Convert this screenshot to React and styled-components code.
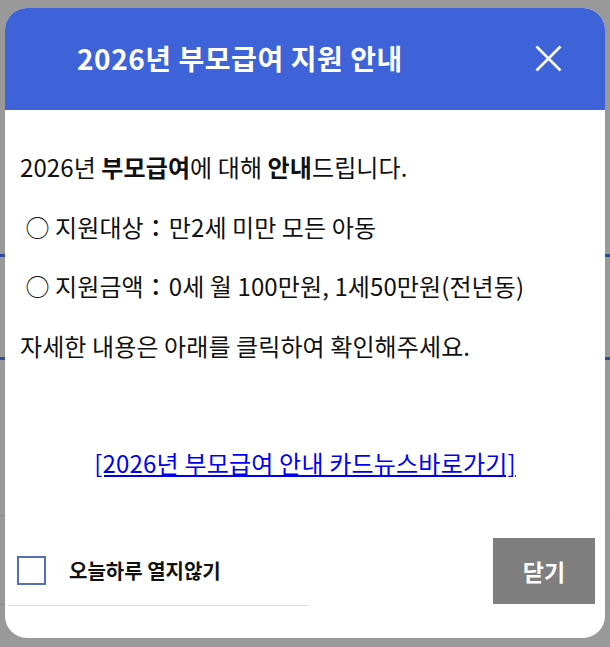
import React from 'react'
import styled, { createGlobalStyle } from 'styled-components'

const GlobalStyle = createGlobalStyle`
  html, body {
    margin: 0;
    padding: 0;
  }
  body {
    background-color: #999999;
    background-image:
      linear-gradient(to bottom, transparent 254px, #2e4a9c 254px, #2e4a9c 257px, transparent 257px),
      linear-gradient(to bottom, transparent 357px, #2e4a9c 357px, #2e4a9c 360px, transparent 360px),
      linear-gradient(to bottom, transparent 515px, #8e8e8e 515px, #8e8e8e 516px, transparent 516px),
      linear-gradient(to bottom, transparent 604px, #8e8e8e 604px, #8e8e8e 605px, transparent 605px);
    background-repeat: no-repeat;
    font-family: "Noto Sans CJK KR", "Noto Sans", sans-serif;
  }
`

const Overlay = styled.div`
  width: 610px;
  height: 647px;
  padding: 8px 5px 9px;
  box-sizing: border-box;
`

const Modal = styled.div`
  width: 600px;
  height: 630px;
  background: #fff;
  border-radius: 22px;
  overflow: hidden;
  display: flex;
  flex-direction: column;
`

const Header = styled.div`
  height: 102px;
  flex-shrink: 0;
  background: #3e62d8;
  display: flex;
  align-items: center;
  justify-content: space-between;
  padding: 0 43px 2px 72px;
  box-sizing: border-box;
`

const Title = styled.h1`
  margin: 0;
  color: #fff;
  font-size: 28px;
  font-weight: 700;
  letter-spacing: 0.55px;
`

const CloseButton = styled.button`
  width: 27px;
  height: 27px;
  padding: 0;
  border: 0;
  background: none;
  cursor: pointer;
  display: flex;
`

const Body = styled.div`
  padding: 42px 0 0 15px;
  display: flex;
  flex-direction: column;
  gap: 29.5px;
`

const Line = styled.p`
  margin: 0;
  font-size: 24px;
  line-height: 30px;
  color: #111;
  white-space: pre;
  letter-spacing: 0.1px;
`

const Colon = styled.span`
  font-weight: 500;
  letter-spacing: 1px;
`

const LinkRow = styled.div`
  margin-top: 87px;
  text-align: center;
  font-size: 24px;
  line-height: 30px;
`

const CardLink = styled.a`
  color: #0000ee;
  text-decoration: underline;
  letter-spacing: 0.2px;
`

const Footer = styled.div`
  margin-top: auto;
  margin-bottom: 32px;
  display: flex;
  justify-content: space-between;
  align-items: flex-start;
  padding: 0 10px 0 3px;
`

const Today = styled.label`
  width: 300px;
  height: 68px;
  box-sizing: border-box;
  border-bottom: 1px solid #dddddd;
  display: flex;
  align-items: center;
  gap: 23px;
  padding: 0 0 2px 9px;
  font-size: 20px;
  font-weight: 700;
  color: #111;
`

const Box = styled.span`
  width: 29px;
  height: 29px;
  flex-shrink: 0;
  box-sizing: border-box;
  border: 2px solid #5470b4;
  background: #fff;
`

const Shut = styled.button`
  width: 102px;
  height: 66px;
  border: 0;
  background: #7f7f7f;
  color: #fff;
  font-family: inherit;
  font-size: 23px;
  font-weight: 700;
  cursor: pointer;
`

export default function App() {
  return (
    <>
      <GlobalStyle />
      <Overlay>
        <Modal>
          <Header>
            <Title>2026년 부모급여 지원 안내</Title>
            <CloseButton aria-label="닫기">
              <svg width="27" height="27" viewBox="0 0 27 27">
                <path d="M1.5 1.5 L25.5 25.5 M25.5 1.5 L1.5 25.5" stroke="#fff" strokeWidth="2.6" />
              </svg>
            </CloseButton>
          </Header>
          <Body>
            <Line>2026년 <b>부모급여</b>에 대해 <b>안내</b>드립니다.</Line>
            <Line> ○ 지원대상<Colon>：</Colon>만2세 미만 모든 아동</Line>
            <Line> ○ 지원금액<Colon>：</Colon>0세 월 100만원, 1세50만원(전년동)</Line>
            <Line>자세한 내용은 아래를 클릭하여 확인해주세요.</Line>
          </Body>
          <LinkRow>
            <CardLink href="#">[2026년 부모급여 안내 카드뉴스바로가기]</CardLink>
          </LinkRow>
          <Footer>
            <Today>
              <Box />
              오늘하루 열지않기
            </Today>
            <Shut>닫기</Shut>
          </Footer>
        </Modal>
      </Overlay>
    </>
  )
}
